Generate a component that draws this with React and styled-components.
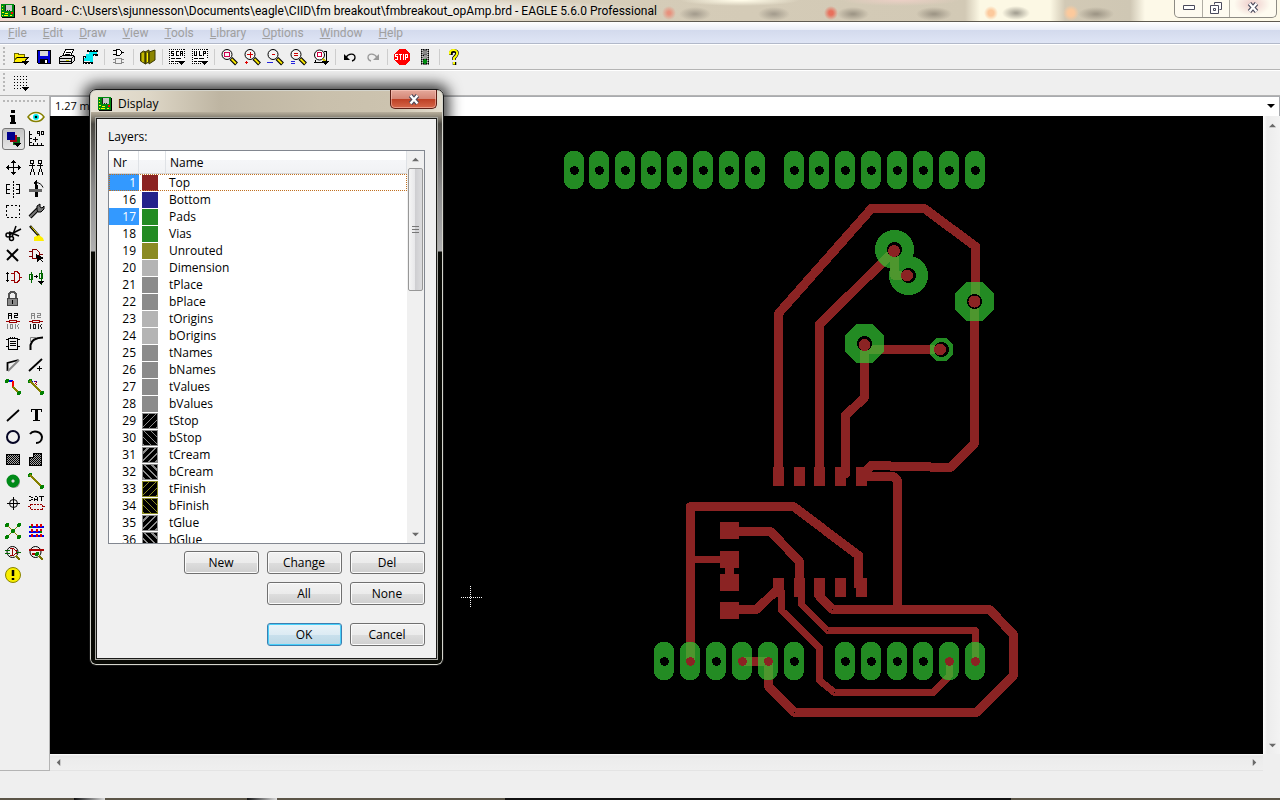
import React from "react";
import styled, { createGlobalStyle, css } from "styled-components";

const RED = "#8b2323";
const GREEN = "#238b23";
const OVERLAP = "#4e962e";

const GlobalStyle = createGlobalStyle`
  * { box-sizing: border-box; }
  body {
    margin: 0;
    font-family: "Open Sans", "Noto Sans", sans-serif;
    font-size: 12px;
    line-height: 16px;
    color: #000;
    background: #efefef;
  }
  button, input { font: inherit; color: inherit; }
  svg { display: block; }
`;

/* ---------- window frame ---------- */

const Window = styled.div`
  position: relative;
  display: flex;
  flex-direction: column;
  min-height: 100vh;
  overflow: hidden;
  background: #efefef;
`;

const TitleBar = styled.header`
  display: flex;
  align-items: center;
  height: 22px;
  border-bottom: 1px solid #5e5a50;
  background:
    radial-gradient(ellipse 330px 14px at 330px 11px, rgba(255, 255, 255, 0.6) 50%, rgba(255, 255, 255, 0) 100%),
    radial-gradient(circle 7px at 669px 13px, #e8907c 20%, transparent),
    radial-gradient(ellipse 16px 7px at 695px 14px, #a79f90 10%, transparent),
    radial-gradient(ellipse 16px 7px at 774px 14px, #a79f90 10%, transparent),
    radial-gradient(circle 7px at 831px 13px, #e8705c 30%, transparent),
    radial-gradient(ellipse 16px 7px at 853px 14px, #a09888 10%, transparent),
    radial-gradient(ellipse 18px 7px at 934px 14px, #a09888 10%, transparent),
    radial-gradient(circle 7px at 991px 13px, #fcc99c 40%, transparent),
    radial-gradient(ellipse 14px 7px at 1016px 13px, #a8a496 10%, transparent),
    radial-gradient(circle 8px at 1071px 13px, #fcc99c 40%, transparent),
    radial-gradient(ellipse 18px 7px at 1096px 14px, #a09888 10%, transparent),
    radial-gradient(ellipse 18px 12px at 1252px 4px, #e8b8b4 10%, transparent),
    radial-gradient(ellipse 60px 6px at 740px 0px, #fffbe8 10%, transparent),
    radial-gradient(ellipse 60px 6px at 900px 0px, #e9cfc4 10%, transparent),
    linear-gradient(90deg, #f3d5cc 0, #e5dccb 30px, #d5ccb8 640px, #d2c9b5 965px, #fcf8e4 980px, #fcf8e4 1050px, #d2c9b5 1065px, #cfc7b4 1130px, #fdf9e8 1145px);
`;

const WindowTitle = styled.h1`
  flex: 1;
  margin: 0 0 0 5px;
  font-family: Roboto, sans-serif;
  font-size: 12px;
  line-height: 16px;
  font-weight: 400;
  white-space: nowrap;
`;

const CaptionButtons = styled.div`
  display: flex;
  align-self: flex-start;
  height: 18px;
  margin-right: 3px;
  border: 1px solid #8d8b84;
  border-top: 0;
  border-radius: 0 0 5px 5px;
  background: rgba(255, 255, 255, 0.35);
`;

const CaptionButton = styled.button`
  display: grid;
  place-items: center;
  width: ${(p) => (p.$wide ? 47 : 27)}px;
  padding: 0 0 2px;
  border: 0;
  border-left: ${(p) => (p.$first ? 0 : "1px solid #b0ada4")};
  background: none;
`;

const MenuBar = styled.nav`
  display: flex;
  align-items: center;
  height: 22px;
  border-bottom: 1px solid #b2b9ca;
  background: linear-gradient(#fff 0, #e9edf7 8px, #d3daed 8px, #dfe5f5 100%);
`;

const MenuItem = styled.button`
  padding: 0 8px;
  border: 0;
  background: none;
  color: #a0a0a0;
  font-family: Roboto, sans-serif;
  &::first-letter { text-decoration: underline; }
`;

/* ---------- toolbars ---------- */

const Toolbar = styled.div`
  display: flex;
  align-items: center;
  height: 26px;
  padding-left: 3px;
  border-top: 1px solid #fff;
  border-bottom: 1px solid #b4b4b4;
`;

const Grip = styled.div`
  ${(p) =>
    p.$across
      ? css`
          width: 43px;
          height: 3px;
          margin: 4px 3px 3px;
          background: radial-gradient(circle at 1px 1px, #b8b8b8 1px, transparent 1px) 0 0 / 4px 3px;
        `
      : css`
          width: 3px;
          height: 20px;
          margin-right: 4px;
          background: radial-gradient(circle at 1px 1px, #b8b8b8 1px, transparent 1px) 0 0 / 3px 4px;
        `}
`;

const ToolButton = styled.button`
  display: grid;
  place-items: center;
  width: 23px;
  height: 22px;
  padding: 0 1px 0 0;
  border: ${(p) => (p.$pressed ? "1px solid #777" : "0")};
  border-radius: 3px;
  background: ${(p) => (p.$pressed ? "linear-gradient(#c4c4c4, #e6e6e6)" : "none")};
`;

const Separator = styled.div`
  width: 1px;
  height: 16px;
  margin: 0 3px 0 2px;
  background: #cdcdcd;
`;

const Workspace = styled.main`
  display: flex;
  flex: 1;
`;

const Palette = styled.aside`
  width: 50px;
  flex: none;
  border-right: 1px solid #b4b4b4;
  border-bottom: 1px solid #b4b4b4;
`;

const PaletteGroup = styled.div`
  display: grid;
  grid-template-columns: 23px 23px;
  padding: 0 0 6px 2px;
`;

/* ---------- editor ---------- */

const Editor = styled.section`
  display: flex;
  flex: 1;
  flex-direction: column;
  min-width: 0;
`;

const CommandRow = styled.div`
  display: flex;
  align-items: center;
  height: 20px;
  padding-bottom: 2px;
  border: 1px solid #a8aaae;
  border-width: 1px 1px 0;
  background: #fff;
`;

const CommandInput = styled.input`
  flex: 1;
  min-width: 0;
  padding: 0 4px;
  border: 0;
  outline: 0;
  background: none;
  font-size: 11px;
`;

const DropButton = styled.button`
  display: grid;
  place-items: center;
  width: 16px;
  padding: 0;
  border: 0;
  background: none;
`;

const CanvasRow = styled.div`
  display: flex;
  flex: 1;
`;

const Canvas = styled.div`
  flex: 1;
  min-width: 0;
  overflow: hidden;
  background: #000;
`;

const ScrollTrack = styled.div`
  display: flex;
  flex: none;
  flex-direction: ${(p) => (p.$vertical ? "column" : "row")};
  justify-content: space-between;
  align-items: center;
  ${(p) =>
    p.$vertical
      ? "width: 17px; padding: 6px 0 5px 2px; background: linear-gradient(90deg, #fff, #ececec 4px, #f3f3f3);"
      : "height: 17px; padding: 0 5px; margin-right: 17px; background: linear-gradient(#fff, #e6e6e6 2px, #ececec 5px, #efefef); border-bottom: 1px solid #e4e4e4;"}
`;

const StatusBar = styled.footer`
  height: 29px;
  border-bottom: 2px solid;
  border-image: linear-gradient(90deg, #5b5548 76px, #111 76px, #ddd 107px, #5b5548 107px, #5b5548 248px, #111 248px, #ddd 278px, #5b5548 278px, #5b5548 505px, #111 505px, #111 1010px, #5b5548 1010px) 2;
`;

/* ---------- dialog ---------- */

const Dialog = styled.section`
  position: absolute;
  left: 89px;
  top: 89px;
  width: 355px;
  padding: 0 6px 6px;
  border: 1px solid #161616;
  border-radius: 7px;
  background:
    linear-gradient(90deg, #e8e3d6 0, #ddd6c6 60px, #beb5a2 130px, #c9c0ac 230px, #ccc3af 300px, #e4decf 100%) 0 0 / 100% 22px no-repeat,
    linear-gradient(#d5cdbb 0, #b9b09d 22px, #4a4842 34px, #8c8c8c 100px, #b0b0b0 161px, #080904 162px);
  box-shadow: inset 0 0 0 1px #d4d4cc, 0 0 14px 5px rgba(0, 0, 0, 0.75);
`;

const DialogTitle = styled.header`
  display: flex;
  align-items: center;
  height: 28px;
  padding-left: 1px;
  gap: 5px;
`;

const DialogName = styled.h2`
  flex: 1;
  margin: 0;
  font-size: 12px;
  font-weight: 400;
`;

const CloseButton = styled.button`
  display: grid;
  place-items: center;
  align-self: flex-start;
  width: 47px;
  height: 19px;
  padding: 0;
  border: 1px solid #5a1d14;
  border-top: 0;
  border-radius: 0 0 5px 5px;
  background: linear-gradient(#e5a99b, #d48575 9px, #bd3f24 9px, #d6674a);
  box-shadow: inset 0 0 0 1px rgba(255, 210, 200, 0.5);
`;

const DialogBody = styled.div`
  padding: 10px 11px 12px;
  border: 1px solid #1a1a18;
  outline: 1px solid #a8a8a2;
  background: #f0f0f0;
`;

const ListLabel = styled.h3`
  margin: 0 0 5px;
  font-size: 12px;
  font-weight: 400;
`;

const LayerList = styled.div`
  display: flex;
  height: 394px;
  border: 1px solid #828790;
  background: #fff;
  overflow: hidden;
`;

const LayerTable = styled.table`
  flex: 1;
  align-self: flex-start;
  table-layout: fixed;
  border-collapse: separate;
  border-spacing: 0;
  line-height: 17px;
`;

const HeadCell = styled.th`
  width: ${(p) => (p.$w ? `${p.$w}px` : "auto")};
  height: 23px;
  padding: 0 0 0 4px;
  border-right: 1px solid #dfe2e6;
  border-bottom: 1px solid #d5d5d5;
  background: linear-gradient(#fff 9px, #f5f6f8 9px, #f1f2f4);
  font-weight: 400;
  text-align: left;
`;

const LayerRow = styled.tr`
  outline: ${(p) => (p.$focused ? "1px dotted #c07020" : "none")};
  outline-offset: -1px;
`;

const Cell = styled.td`
  height: 17px;
  padding: 0 3px;
`;

const NumberCell = styled(Cell)`
  text-align: right;
  color: ${(p) => (p.$selected ? "#fff" : "#000")};
  background: ${(p) => (p.$selected ? "#3399ff" : "none")};
`;

const hatch = (angle, color, line) =>
  `repeating-linear-gradient(${angle}deg, ${color} 0 ${line}px, #000 ${line}px 5px)`;

const Swatch = styled.span`
  display: block;
  width: 16px;
  height: 16px;
  border: 1px solid ${(p) => p.$edge};
  background: ${(p) => (p.$angle ? hatch(p.$angle, p.$color, p.$line) : p.$color)};
`;

const ListScroll = styled.div`
  display: flex;
  flex: none;
  flex-direction: column;
  align-items: center;
  width: 17px;
  padding: 5px 0;
  background: #f0f0f0;
`;

const Thumb = styled.div`
  display: grid;
  place-items: center;
  width: 15px;
  height: 123px;
  margin: 5px 0 auto;
  border: 1px solid #979797;
  border-radius: 2px;
  background: linear-gradient(90deg, #f5f5f5, #e8e8ea 45%, #cfcfd2 50%, #dcdcde);
`;

const ButtonGrid = styled.div`
  display: grid;
  grid-template-columns: repeat(3, 75px);
  justify-content: end;
  gap: 8px;
  margin-top: 7px;
`;

const PushButton = styled.button`
  height: 23px;
  padding: 0 1px 0 0;
  grid-column: ${(p) => p.$col};
  margin-top: ${(p) => (p.$apart ? 10 : 0)}px;
  border: 1px solid ${(p) => (p.$primary ? "#3c7fb1" : "#707070")};
  border-radius: 3px;
  background: ${(p) =>
    p.$primary
      ? "linear-gradient(#eaf3f8, #dcebf3 11px, #c9e0ec 11px, #bcd8e6)"
      : "linear-gradient(#f2f2f2, #ebebeb 11px, #dddddd 11px, #cfcfcf)"};
  box-shadow: inset 0 0 0 1px ${(p) => (p.$primary ? "#48d0fa" : "#fbfbfb")};
`;

/* ---------- icons ---------- */

const Icon = ({ children, soft }) => (
  <svg
    width="18"
    height="18"
    viewBox="0 0 18 18"
    fill="none"
    stroke="#000"
    shapeRendering={soft ? "auto" : "crispEdges"}
    aria-hidden="true"
  >
    {children}
  </svg>
);

const Drop = () => <path d="M10 13h7l-3.500 4z" fill="#000" stroke="none" />;

const BoardIcon = () => (
  <svg width="16" height="16" viewBox="0 0 16 16" shapeRendering="crispEdges" aria-hidden="true">
    <path d="M2 2h13v13H2z" fill="#000" />
    <path d="M1 1h13v13H1z" fill="#008a10" />
    <path d="M5 2h7v6H5z" fill="#c8c8c8" />
    <path d="M5 2h1v6h-1zM7 7h1v1h-1zM9 7h1v1h-1z" fill="#222" />
    <path d="M2 3h1v1H2zM2 6h1v1H2zM2 9h2v1H2zM4 12h4v1H4zM5 10h3v1H5zM10 12h2v1h-2zM2 12h1v1H2z" fill="#ff0" />
    <path d="M11 9h2v2h-2z" fill="#f00" />
  </svg>
);

const Lens = ({ inner, below, red = "#d00000" }) => (
  <Icon>
    <circle cx="7" cy="6.500" r="5" fill="#f4f4f4" shapeRendering="auto" />
    <path d="M11 10.500l5.500 5.500" strokeWidth="4" shapeRendering="auto" />
    <path d="M11.500 11l4.500 4.500" stroke="#f5e400" strokeWidth="1.800" shapeRendering="auto" />
    <path d={inner} stroke={red} />
    {below}
  </Icon>
);

const ScriptIcon = ({ word }) => (
  <Icon>
    <path d="M1 1h16v14H1z" fill="#fafafa" stroke="none" />
    <path d="M1.500 1v15M1 1.500h16M16.500 1v10M1 15.500h10" strokeDasharray="1 1" />
    {word}
    <path d="M3 10.500h4M8 10.500h5M3 13.500h3M7 13.500h3" />
    <Drop />
  </Icon>
);

const TrafficIcon = () => (
  <Icon>
    <path d="M5 1h8v16H5z" fill="#666" stroke="none" />
    <path d="M5.500 1v16M7.500 1v16M10.500 1v16M12.500 1v16" strokeDasharray="1 1" />
    <path d="M6.500 2v15M11.500 2v15" strokeDasharray="1 1" stroke="#ccc" />
    <circle cx="9" cy="4.500" r="2" fill="#888" stroke="none" />
    <circle cx="9" cy="9" r="2" fill="#999" stroke="none" />
    <circle cx="9" cy="13.500" r="2.300" fill="#008a10" stroke="none" />
  </Icon>
);

const mainTools = [
  ["Open", <Icon><path d="M2 14V5.500h4l1 1h5v3M2 14l3-5h11l-4 5z" fill="#ffef00" stroke="#6b6500" /><path d="M2 14.500h10M5 9.500h11l-4 5" /><Drop /></Icon>],
  ["Save", <Icon><path d="M2.500 2.500h13v13h-12l-1-1z" fill="#0000d8" /><path d="M5 3h8v5H5z" fill="#d8d8d8" stroke="none" /><path d="M5 11h8v5H5z" fill="#000" stroke="none" /><path d="M10 12h2v3h-2z" fill="#fff" stroke="none" /></Icon>],
  ["Print", <Icon><path d="M5 8l2.500-6.500h8L13 8" fill="#fff" /><path d="M8 4.500h5M7 6.500h5" /><path d="M1.500 9.500l3-2h11l1 1v4l-3 3h-12z" fill="#e0e0e0" /><path d="M2 10.500h11v5M2 13.500h11M13 10.500l3-2" /><path d="M8 12.500h3" stroke="#cc0" /></Icon>],
  ["CAM processor", <Icon><path d="M8 3h8v4H8zM3 9h8v4H3z" fill="#00e8f0" stroke="none" /><path d="M6 2h11v2H6zM6 6h11v2H6zM2 8h3v2H2zM2 14h10v2H2zM2 10h1v4H2z" fill="#000" stroke="none" /><path d="M8 2.500h9M7 7.500h9M3 15.500h9M3 9.500h2" stroke="#fff" strokeDasharray="1 2" /><path d="M9 6h3v8H9zM5 6h5v7H5z" fill="#00e8f0" stroke="none" /></Icon>],
  null,
  ["Board / schematic", <Icon><path d="M3 2.500h3M3 6.500h3M6.500 1.500h3l2 2v2l-2 2h-3zM12 4.500h2" fill="#fff" /><path d="M5.500 10.500h6v5h-6zM3 11.500h2M3 14.500h2M12 11.500h2M12 14.500h2" stroke="#888" strokeWidth="1" /></Icon>],
  null,
  ["Library", <Icon soft><path d="M1.500 5l3-2 2 1v12l-5-3zM6 4l4-2v12l-4 2zM10 4l6-2v10l-6 4z" fill="#8a8400" stroke="#3d3a00" /><path d="M4 5v9M8.500 5v9" stroke="#ffef00" /></Icon>],
  null,
  ["Run script", <ScriptIcon word={<path d="M6 3.500H3.500v2h2v2H3M11 3.500H8.500v4H11M12.500 8V3.500h2v2h-2M14.500 6v2" />} />],
  ["Run ULP", <ScriptIcon word={<path d="M3.500 3v4.500h2V3M8.500 3v4.500H11M12.500 8V3.500h2v2h-2" />} />],
  null,
  ["Fit", <Lens inner="M4.500 4.500h5v4h-5z" red="#d00050" />],
  ["Zoom in", <Lens inner="M4 6.500h6M7.500 4v6" below={<path d="M2 14.500h3M3.500 13v3" stroke="#d00" />} />],
  ["Zoom out", <Lens inner="M6 6.500h3" below={<path d="M1 14.500h6" stroke="#22d" />} />],
  ["Redraw", <Lens inner="M5 5.500h4M5 7.500h4" below={<path d="M2 13.500h4M2 15.500h4" stroke="#22d" />} />],
  ["Select zoom", <Icon><path d="M2 14.500h9M3.500 12v2M14.500 3v11M12 3.500h3" /><circle cx="7.500" cy="7" r="5" fill="#fff" shapeRendering="auto" /><path d="M5.500 4.500h4v4h-4z" stroke="#d00040" /><path d="M11 11l3 3" strokeWidth="2" stroke="#c9bd00" /><Drop /></Icon>],
  null,
  ["Undo", <Icon soft><path d="M5 9.500c3-5 9-4 9 0 0 2-1 3-3 3.500" strokeWidth="1.300" /><path d="M3 6v6h6z" fill="#000" stroke="none" /></Icon>],
  ["Redo", <Icon soft><path d="M13 9.500c-3-5-9-4-9 0 0 2 1 3 3 3.500" stroke="#999" strokeWidth="1.300" /><path d="M15 6v6H9z" fill="#999" stroke="none" /></Icon>],
  null,
  ["Stop", <Icon><path d="M6 1h6l5 5v6l-5 5H6l-5-5V6z" fill="#f00" stroke="none" /><path d="M5 6.500H2.500v2h2v3H2M6 6.500h3M7.500 6v6M10.500 6v6M12.500 12V6.500h2v3h-2" stroke="#fff" /></Icon>],
  ["Go", <TrafficIcon />],
  null,
  ["Help", <Icon soft><path d="M6 7V5q0-2 3-2t3 2-3 5v2M9.500 14v3" strokeWidth="3.500" /><path d="M5 6.500V4.500q0-2 3-2.500t4 2-3 6v2M9 14v2.500" stroke="#ff0" strokeWidth="2" /></Icon>],
];

const dot = (x, y, r = 2) => <circle cx={x} cy={y} r={r} fill="#008000" stroke="none" />;

const ResistorIcon = ({ top, body, value }) => (
  <Icon>
    <path d="M4.500 7V1.500h3v2h-3M7.500 4v3M10 1.500h3.500v2h-3v2H14" stroke={top} />
    <path d="M2 9.500h3M13 9.500h3" stroke={body} />
    <path d="M5.500 8.500h7v2h-7z" fill="#eee" stroke={body} />
    <path d="M3.500 12v5M6.500 12.500h2v4h-2zM11.500 12v5M14.500 12v1M13.500 13v2M14.500 15v2" stroke={value} />
  </Icon>
);

const EyeIcon = () => (
  <Icon soft>
    <path d="M1 9c4-6 12-6 16 0-4 6-12 6-16 0z" fill="#fff" stroke="#858000" strokeWidth="1.500" />
    <circle cx="9" cy="9" r="3" fill="#0ee" stroke="none" />
    <circle cx="9" cy="9" r="1.300" fill="#000" stroke="none" />
  </Icon>
);

const paletteGroups = [
  [
    ["Info", <Icon><path d="M7 2h4v3H7zM6 7h5v7h1v2H6v-2h1V9H6z" fill="#000" stroke="none" /></Icon>],
    ["Show", <EyeIcon />],
    ["Display layers", <Icon><path d="M9 7h7v8H9z" fill="#0a6b1a" stroke="none" /><path d="M6 5h7v7H6z" fill="#a00010" stroke="none" /><path d="M3 2h8v8H3z" fill="#00008c" stroke="none" /><Drop /></Icon>],
    ["Mark", <Icon><path d="M2.500 1v14.500H17M2 4.500h3M2 8.500h3M2 12.500h3M6.500 13v3M10.500 13v3M14.500 13v3M6 9.500h5M8.500 7v5M12.500 6V1.500h-2v2h2M14.500 1.500h2v3h-2z" /></Icon>],
  ],
  [
    ["Move", <Icon><path d="M9.500 3v13M3 9.500h13" /><path d="M7 5h5L9.500 2zM7 14h5l-2.500 3zM5 7v5L2 9.500zM14 7v5l3-2.500z" fill="#000" stroke="none" /></Icon>],
    ["Copy", <Icon><path d="M3.500 2.500h3v3h-3zM11.500 2.500h3v3h-3zM2 7.500h6M10 7.500h6M5.500 6v5M4.500 11v3M3.500 14v3M6.500 11v3M7.500 14v3M13.500 6v5M12.500 11v3M11.500 14v3M14.500 11v3M15.500 14v3" /></Icon>],
    ["Mirror", <Icon><path d="M6 4.500H2.500v9H6M3 9.500h3M12 4.500h3.500v9H12M12 9.500h3" /><path d="M9.500 1v17" strokeDasharray="2 1" /></Icon>],
    ["Rotate", <Icon><path d="M9.500 5v12" strokeWidth="3" /><path d="M2 10.500h13" stroke="#666" strokeWidth="3" /><path d="M9 2.500c3 0 6 2 7 5" shapeRendering="auto" /><path d="M10 0v6L6 3z" fill="#000" stroke="none" /></Icon>],
    ["Group", <Icon><path d="M2.500 3.500h13v12h-13z" strokeDasharray="2 2" /></Icon>],
    ["Change", <Icon soft><path d="M3 15l8-8" strokeWidth="4" /><path d="M3 15l8-8" stroke="#777" strokeWidth="2" /><path d="M10 8V4l3-2v3l2 1 2-2v3l-3 3h-3z" fill="#777" /></Icon>],
    ["Cut", <Icon soft><path d="M17 5L5 11M15 12L5 8" strokeWidth="1.600" /><circle cx="4" cy="11" r="2" strokeWidth="1.500" /><circle cx="7.500" cy="14.500" r="2" strokeWidth="1.500" /><path d="M12 2L8 13" strokeWidth="1.500" /></Icon>],
    ["Paste", <Icon soft><path d="M3 2l9 10" strokeWidth="2.500" /><path d="M4 2.500l7 8" stroke="#f5e400" /><path d="M7 13l5-2 4 3 1 3H7z" fill="#ffef00" stroke="none" /></Icon>],
    ["Delete", <Icon soft><path d="M3 4l11 11M14 3L3 14" strokeWidth="2" /></Icon>],
    ["Add", <Icon><path d="M5.500 3.500h4l3 3v3l-3 3h-4zM2 5.500h3M2 10.500h3M12 8.500h4" stroke="#800000" /><path d="M9 8l8 4-3 1 2 3-3-2-3 2z" fill="#000" stroke="none" /></Icon>],
    ["Pinswap", <Icon><path d="M3.500 4v10M2 5.500h3M2 12.500h3" /><path d="M7 5.500h3M7 12.500h3M16 9.500h2M14 3.500h-3.500v11H14M13.500 4l2 2v6l-2 2" stroke="#900" /></Icon>],
    ["Replace", <Icon><path d="M4.500 4v11M2.500 6.500h3v5h-3zM14.500 2v15M12.500 5.500h3v5h-3z" stroke="#060" /><path d="M7 8.500h4M9.500 7v3" /><path d="M11 13h6l-3 4z" fill="#000" stroke="none" /></Icon>],
    ["Lock", <Icon><path d="M5 8V4l2-2h3l2 2v4" stroke="#555" strokeWidth="2" /><path d="M3.500 8.500h10v7h-10z" fill="#888" stroke="#444" /><path d="M8.500 10v4" /></Icon>],
    null,
    ["Name", <ResistorIcon top="#000" body="#900" value="#888" />],
    ["Value", <ResistorIcon top="#888" body="#900" value="#222" />],
    ["Smash", <Icon><path d="M2 5.500h2M2 12.500h2M14 5.500h2M14 12.500h2M4.500 4v11h9V4zM6 7.500h6M6 9.500h6M6 11.500h6" /><path d="M6 3.500h6" strokeDasharray="1 1" /></Icon>],
    ["Miter", <Icon soft><path d="M3.500 16v-5q1-7 12.500-7.500" strokeWidth="2" /><path d="M3.500 9V3.500H9" stroke="#888" /></Icon>],
    ["Split", <Icon soft><path d="M3.500 15V7l11-3" strokeWidth="1.800" /><path d="M4 15L15 4" stroke="#888" strokeWidth="2" /></Icon>],
    ["Optimize", <Icon soft><path d="M2 15L15 3" strokeWidth="1.800" /><path d="M10 12.500h5M12.500 10v5" /></Icon>],
    ["Route", <Icon>{dot(3, 3)}<path d="M5 3h4" stroke="#00e" strokeWidth="2" /><path d="M9 3v6" stroke="#f00" strokeWidth="2" /><path d="M9 9l6 6" stroke="#858000" strokeWidth="2" />{dot(15, 15)}</Icon>],
    ["Ripup", <Icon>{dot(3, 3)}<path d="M5 3.500h5" stroke="#00c" strokeDasharray="1 1" /><path d="M8.500 3v7M9.500 4v7" stroke="#b00" strokeDasharray="1 1" /><path d="M3 3l12 12" stroke="#858000" strokeWidth="2" />{dot(15, 15)}</Icon>],
  ],
  [
    ["Wire", <Icon soft><path d="M3 15L15 4" strokeWidth="1.800" /></Icon>],
    ["Text", <Icon><path d="M4 3h11v3h-1V4h-3v10h2v1H6v-1h2V4H5v2H4z" fill="#000" stroke="none" /></Icon>],
    ["Circle", <Icon soft><circle cx="9" cy="9" r="6" strokeWidth="2" stroke="#050524" /></Icon>],
    ["Arc", <Icon soft><path d="M3 6c3-4 11-3 12 3 0 4-3 6-6 6" strokeWidth="2" /></Icon>],
    ["Rectangle", <Icon><path d="M2.500 4.500h13v10h-13z" fill="#aaa" /><path d="M4 6.500h11M4 8.500h11M4 10.500h11M4 12.500h11" strokeDasharray="1 1" /><path d="M3 5.500h12M3 7.500h12M3 9.500h12M3 11.500h12M3 13.500h12" strokeDasharray="1 1" /></Icon>],
    ["Polygon", <Icon><path d="M2.500 7.500h4v-4h8v12h-12z" fill="#aaa" /><path d="M8 5.500h6M4 9.500h10M4 11.500h10M4 13.500h10M8 7.500h6" strokeDasharray="1 1" /><path d="M7 4.500h7M7 6.500h7M3 8.500h11M3 10.500h11M3 12.500h11M3 14.500h11" strokeDasharray="1 1" /></Icon>],
    ["Via", <Icon soft><circle cx="10" cy="10" r="6" fill="#999" stroke="none" /><circle cx="9" cy="9" r="4" stroke="#008a18" strokeWidth="5" /><circle cx="9" cy="9" r="1.500" fill="#ddd" stroke="none" /></Icon>],
    ["Signal", <Icon>{dot(3, 3)}<path d="M3 3l12 12" stroke="#858000" strokeWidth="2" />{dot(15, 15)}</Icon>],
    ["Hole", <Icon><circle cx="9.500" cy="9.500" r="4" shapeRendering="auto" /><path d="M9.500 3v13M3 9.500h13" /></Icon>],
    ["Attribute", <Icon><path d="M2 2.500h2M4 3.500h2M4 5.500h2M2 6.500h2M7.500 7V3.500M8 2.500h2M10.500 3v4M8 5.500h2M12 2.500h5M14.500 2v5" /><path d="M3.500 10.500h12v5h-12z" stroke="#900" strokeDasharray="2 1" /><path d="M1 12.500h2M16 12.500h2" stroke="#900" /></Icon>],
  ],
  [
    ["Ratsnest", <Icon><path d="M3 3l12 12M15 3L3 15" stroke="#858000" />{dot(3, 3)}{dot(15, 3)}{dot(9, 9)}{dot(3, 15)}{dot(15, 15)}</Icon>],
    ["Auto", <Icon><path d="M2 5h15M2 10h12M2 14h15" stroke="#00e" strokeWidth="2" /><path d="M5 2v15M10 2v13M14 2v15" stroke="#d00" strokeWidth="2" strokeDasharray="3 2" />{dot(4, 5, 1.5)}{dot(14, 10, 1.5)}</Icon>],
    ["ERC", <Icon><circle cx="8.500" cy="8" r="5.500" shapeRendering="auto" /><path d="M6 4.500h3l3 2v3l-3 2H6M8.500 4v8" stroke="#900" /><path d="M1 6.500h5M1 9.500h5M12 8.500h5" stroke="#060" /><path d="M12 12l4 4" strokeWidth="2" stroke="#777000" /></Icon>],
    ["DRC", <Icon><circle cx="8.500" cy="8" r="5.500" shapeRendering="auto" /><path d="M2 6h15" stroke="#a00" strokeWidth="2" /><path d="M5 10h5" stroke="#a00" strokeWidth="2" /><path d="M12 12l4 4" strokeWidth="2" stroke="#777000" />{dot(10, 10)}</Icon>],
    ["Errors", <Icon soft><circle cx="9" cy="9" r="7.500" fill="#f8ee00" stroke="#8a8400" /><path d="M9 4v6M9 12v2" strokeWidth="2.500" /></Icon>],
  ],
];

const Triangle = ({ d, fill = "#6a6a6a", size = 7 }) => (
  <svg width={size} height={size} viewBox="0 0 8 8" aria-hidden="true">
    <path d={d} fill={fill} />
  </svg>
);
const UP = "M4 2L8 6H0z";
const DOWN = "M4 6L8 2H0z";
const LEFT = "M2 4L6 0v8z";
const RIGHT = "M6 4L2 0v8z";

/* ---------- board drawing ---------- */

const wideTraces = [
  "M778.500 480V313.500L871.500 208.500H924.500L975.500 246.500V300",
  "M974.500 300V443.500L950.500 467.500H930",
  "M931 466.500H890",
  "M891 465.500H871.500L861.500 476.500H893.500L897.500 480.500V609",
  "M819.500 480V324.500L894.500 250.500V275.500H908",
  "M841 477L845.500 473.500V415.500L864.500 397.500V345L869 349.500H941",
  "M690.500 661V506.500H793.500L858.500 555.500V588",
  "M735 531.500H770.500L799.500 561.500V588",
  "M735 609.500H756.500L778.500 588.500",
  "M819.500 590V596.500L832.500 609.500H989.500L1013.500 634.500V675.500L976.500 712.500H794.500L768.500 686.500V661.500H742.500",
  "M729.500 566V576",
];
const thinTraces = [
  "M690 559.500H725",
  "M801.500 590V604.500L827.500 630.500H975.500V661",
  "M781.500 590V610.500L819.500 647.500V680.500L834.500 692.500H933.500L949.500 675.500V661",
];

const topPadXs = [574, 599, 625, 651, 677, 703, 729, 755, 794, 819, 845, 871, 897, 923, 949, 975];
const bottomPadXs = [664, 690, 716, 742, 768, 794, 845, 871, 897, 923, 949, 975];
const wiredXs = [690, 742, 768, 949, 975];
const smdXs = [773, 794, 814, 835, 856];
const resistorYs = [522, 551, 574, 602];

const octagon = (x, y, r) => {
  const k = Math.round(r * 0.42);
  return `M${x - k} ${y - r}H${x + k}L${x + r} ${y - k}V${y + k}L${x + k} ${y + r}H${x - k}L${x - r} ${y + k}V${y - k}Z`;
};

const Traces = ({ color }) => (
  <g fill="none" stroke={color} strokeLinejoin="round">
    {wideTraces.map((d) => <path key={d} d={d} strokeWidth="9" />)}
    {thinTraces.map((d) => <path key={d} d={d} strokeWidth="7" />)}
  </g>
);

const PadShapes = () => (
  <>
    {topPadXs.map((x) => <rect key={`t${x}`} x={x - 10} y="151" width="20" height="38" rx="9" />)}
    {bottomPadXs.map((x) => <rect key={`b${x}`} x={x - 10} y="642" width="20" height="38" rx="9" />)}
    <circle cx="894.500" cy="249.500" r="19.500" />
    <circle cx="908.500" cy="275.500" r="19.500" />
    <path d={octagon(974.5, 301.5, 19.5)} />
    <path d={octagon(864.5, 343.5, 19.5)} />
    <path d={octagon(941.5, 349.5, 11.5)} />
  </>
);

const vias = [
  [894.5, 249.5, 894, 251],
  [908.5, 275.5, 907, 275.5],
  [974.5, 301.5, 974.5, 301.5],
  [864.5, 343.5, 864.5, 345],
  [941.5, 349.5, 940, 349.5],
];

const BoardDrawing = () => (
  <svg width="980" height="620" viewBox="50 116 980 620" shapeRendering="crispEdges" role="img" aria-label="Board layout">
    <defs>
      <clipPath id="pads"><PadShapes /></clipPath>
    </defs>
    <Traces color={RED} />
    <g fill={RED}>
      {smdXs.map((x) => (
        <React.Fragment key={x}>
          <rect x={x} y="467" width="11" height="19" />
          <rect x={x} y="578" width="11" height="19" />
        </React.Fragment>
      ))}
      {resistorYs.map((y) => <rect key={y} x="720" y={y} width="19" height="17" />)}
    </g>
    <g fill={GREEN}><PadShapes /></g>
    <g clipPath="url(#pads)"><Traces color={OVERLAP} /></g>
    {topPadXs.map((x) => <circle key={x} cx={x + 0.5} cy="170.500" r="4.500" fill="#000" />)}
    {bottomPadXs.map((x) => (
      <circle key={x} cx={x + 0.5} cy="661.500" r="4.500" fill={wiredXs.includes(x) ? RED : "#000"} />
    ))}
    {vias.map(([x, y, dx, dy]) => (
      <g key={x}>
        <circle cx={x} cy={y} r="7.500" fill="#000" />
        <circle cx={dx} cy={dy} r="6" fill={RED} />
      </g>
    ))}
    <path d="M461 597.500h22M470.500 586v22" stroke="#fff" strokeDasharray="1 1" />
  </svg>
);

/* ---------- data ---------- */

const layers = [
  [1, "Top", RED], [16, "Bottom", "#23238b"], [17, "Pads", GREEN], [18, "Vias", GREEN],
  [19, "Unrouted", "#8b8b23"], [20, "Dimension", "#b4b4b4"], [21, "tPlace", "#8b8b8b"],
  [22, "bPlace", "#8b8b8b"], [23, "tOrigins", "#b4b4b4"], [24, "bOrigins", "#b4b4b4"],
  [25, "tNames", "#8b8b8b"], [26, "bNames", "#8b8b8b"], [27, "tValues", "#8b8b8b"],
  [28, "bValues", "#8b8b8b"], [29, "tStop", "#8b8b8b", -45, 1], [30, "bStop", "#8b8b8b", 45, 1],
  [31, "tCream", "#8b8b8b", -45, 2], [32, "bCream", "#8b8b8b", 45, 2],
  [33, "tFinish", "#8b8b23", -45, 1], [34, "bFinish", "#8b8b23", 45, 1],
  [35, "tGlue", "#8b8b8b", -45, 2], [36, "bGlue", "#8b8b8b", 45, 2],
];
const selected = [1, 17];
const menus = ["File", "Edit", "Draw", "View", "Tools", "Library", "Options", "Window", "Help"];

const Cross = () => (
  <svg width="12" height="11" viewBox="0 0 12 11" aria-hidden="true">
    <path d="M2.500 1.500l7 8M9.500 1.500l-7 8" stroke="#4a4a5c" strokeWidth="4.500" />
    <path d="M2.500 1.500l7 8M9.500 1.500l-7 8" stroke="#fff" strokeWidth="2.300" />
  </svg>
);

const LayerDialog = () => (
  <Dialog role="dialog" aria-labelledby="dialog-name">
    <DialogTitle>
      <BoardIcon />
      <DialogName id="dialog-name">Display</DialogName>
      <CloseButton aria-label="Close dialog"><Cross /></CloseButton>
    </DialogTitle>
    <DialogBody>
      <ListLabel id="layers-label">Layers:</ListLabel>
      <LayerList>
        <LayerTable aria-labelledby="layers-label">
          <thead>
            <tr>
              <HeadCell $w={30}>Nr</HeadCell>
              <HeadCell $w={27} aria-label="Colour" />
              <HeadCell>Name</HeadCell>
            </tr>
          </thead>
          <tbody>
            {layers.map(([nr, name, color, angle, line]) => (
              <LayerRow key={nr} $focused={nr === 1}>
                <NumberCell $selected={selected.includes(nr)}>{nr}</NumberCell>
                <Cell>
                  <Swatch $color={color} $angle={angle} $line={line} $edge={color} />
                </Cell>
                <Cell>{name}</Cell>
              </LayerRow>
            ))}
          </tbody>
        </LayerTable>
        <ListScroll>
          <Triangle d={UP} />
          <Thumb>
            <svg width="7" height="8" viewBox="0 0 7 8" aria-hidden="true">
              <path d="M0 .5h7M0 3.500h7M0 6.500h7" stroke="#777" />
            </svg>
          </Thumb>
          <Triangle d={DOWN} />
        </ListScroll>
      </LayerList>
      <ButtonGrid>
        <PushButton $col={1}>New</PushButton>
        <PushButton $col={2}>Change</PushButton>
        <PushButton $col={3}>Del</PushButton>
        <PushButton $col={2}>All</PushButton>
        <PushButton $col={3}>None</PushButton>
        <PushButton $col={2} $apart $primary>OK</PushButton>
        <PushButton $col={3} $apart>Cancel</PushButton>
      </ButtonGrid>
    </DialogBody>
  </Dialog>
);

export default function App() {
  return (
    <Window>
      <GlobalStyle />
      <TitleBar>
        <BoardIcon />
        <WindowTitle>
          1 Board - C:\Users\sjunnesson\Documents\eagle\CIID\fm breakout\fmbreakout_opAmp.brd - EAGLE 5.6.0 Professional
        </WindowTitle>
        <CaptionButtons>
          <CaptionButton $first aria-label="Minimize">
            <svg width="12" height="5" viewBox="0 0 12 5"><path d="M.5.500h11v4H.5z" fill="#fff" stroke="#4a4a5c" /></svg>
          </CaptionButton>
          <CaptionButton aria-label="Restore">
            <svg width="13" height="12" viewBox="0 0 13 12"><path d="M4.500.500h7v7h-2M4.500.500v2M.5 3.500h8v8h-8zM3.500 6.500h2v2h-2z" fill="#fff" stroke="#4a4a5c" /></svg>
          </CaptionButton>
          <CaptionButton $wide aria-label="Close"><Cross /></CaptionButton>
        </CaptionButtons>
      </TitleBar>
      <MenuBar>
        {menus.map((m) => <MenuItem key={m}>{m}</MenuItem>)}
      </MenuBar>
      <Toolbar>
        <Grip />
        {mainTools.map((tool, i) =>
          tool ? <ToolButton key={tool[0]} aria-label={tool[0]}>{tool[1]}</ToolButton> : <Separator key={i} />
        )}
      </Toolbar>
      <Toolbar>
        <Grip />
        <ToolButton aria-label="Grid">
          <Icon>
            <path d="M2 2.500h13M2 5.500h13M2 8.500h13M2 11.500h13M2 14.500h9" strokeDasharray="1 2" />
            <Drop />
          </Icon>
        </ToolButton>
      </Toolbar>
      <Workspace>
        <Palette>
          <Grip $across />
          {paletteGroups.map((group, g) => (
            <PaletteGroup key={g}>
              {group.map((tool, i) =>
                tool ? (
                  <ToolButton key={tool[0]} aria-label={tool[0]} $pressed={tool[0] === "Display layers"}>
                    {tool[1]}
                  </ToolButton>
                ) : (
                  <span key={i} />
                )
              )}
            </PaletteGroup>
          ))}
        </Palette>
        <Editor>
          <CommandRow>
            <CommandInput aria-label="Command" defaultValue="1.27 mm" />
            <DropButton aria-label="Command history"><Triangle d={DOWN} fill="#000" size={8} /></DropButton>
          </CommandRow>
          <CanvasRow>
            <Canvas><BoardDrawing /></Canvas>
            <ScrollTrack $vertical><Triangle d={UP} /><Triangle d={DOWN} /></ScrollTrack>
          </CanvasRow>
          <ScrollTrack><Triangle d={LEFT} /><Triangle d={RIGHT} /></ScrollTrack>
        </Editor>
      </Workspace>
      <StatusBar />
      <LayerDialog />
    </Window>
  );
}
